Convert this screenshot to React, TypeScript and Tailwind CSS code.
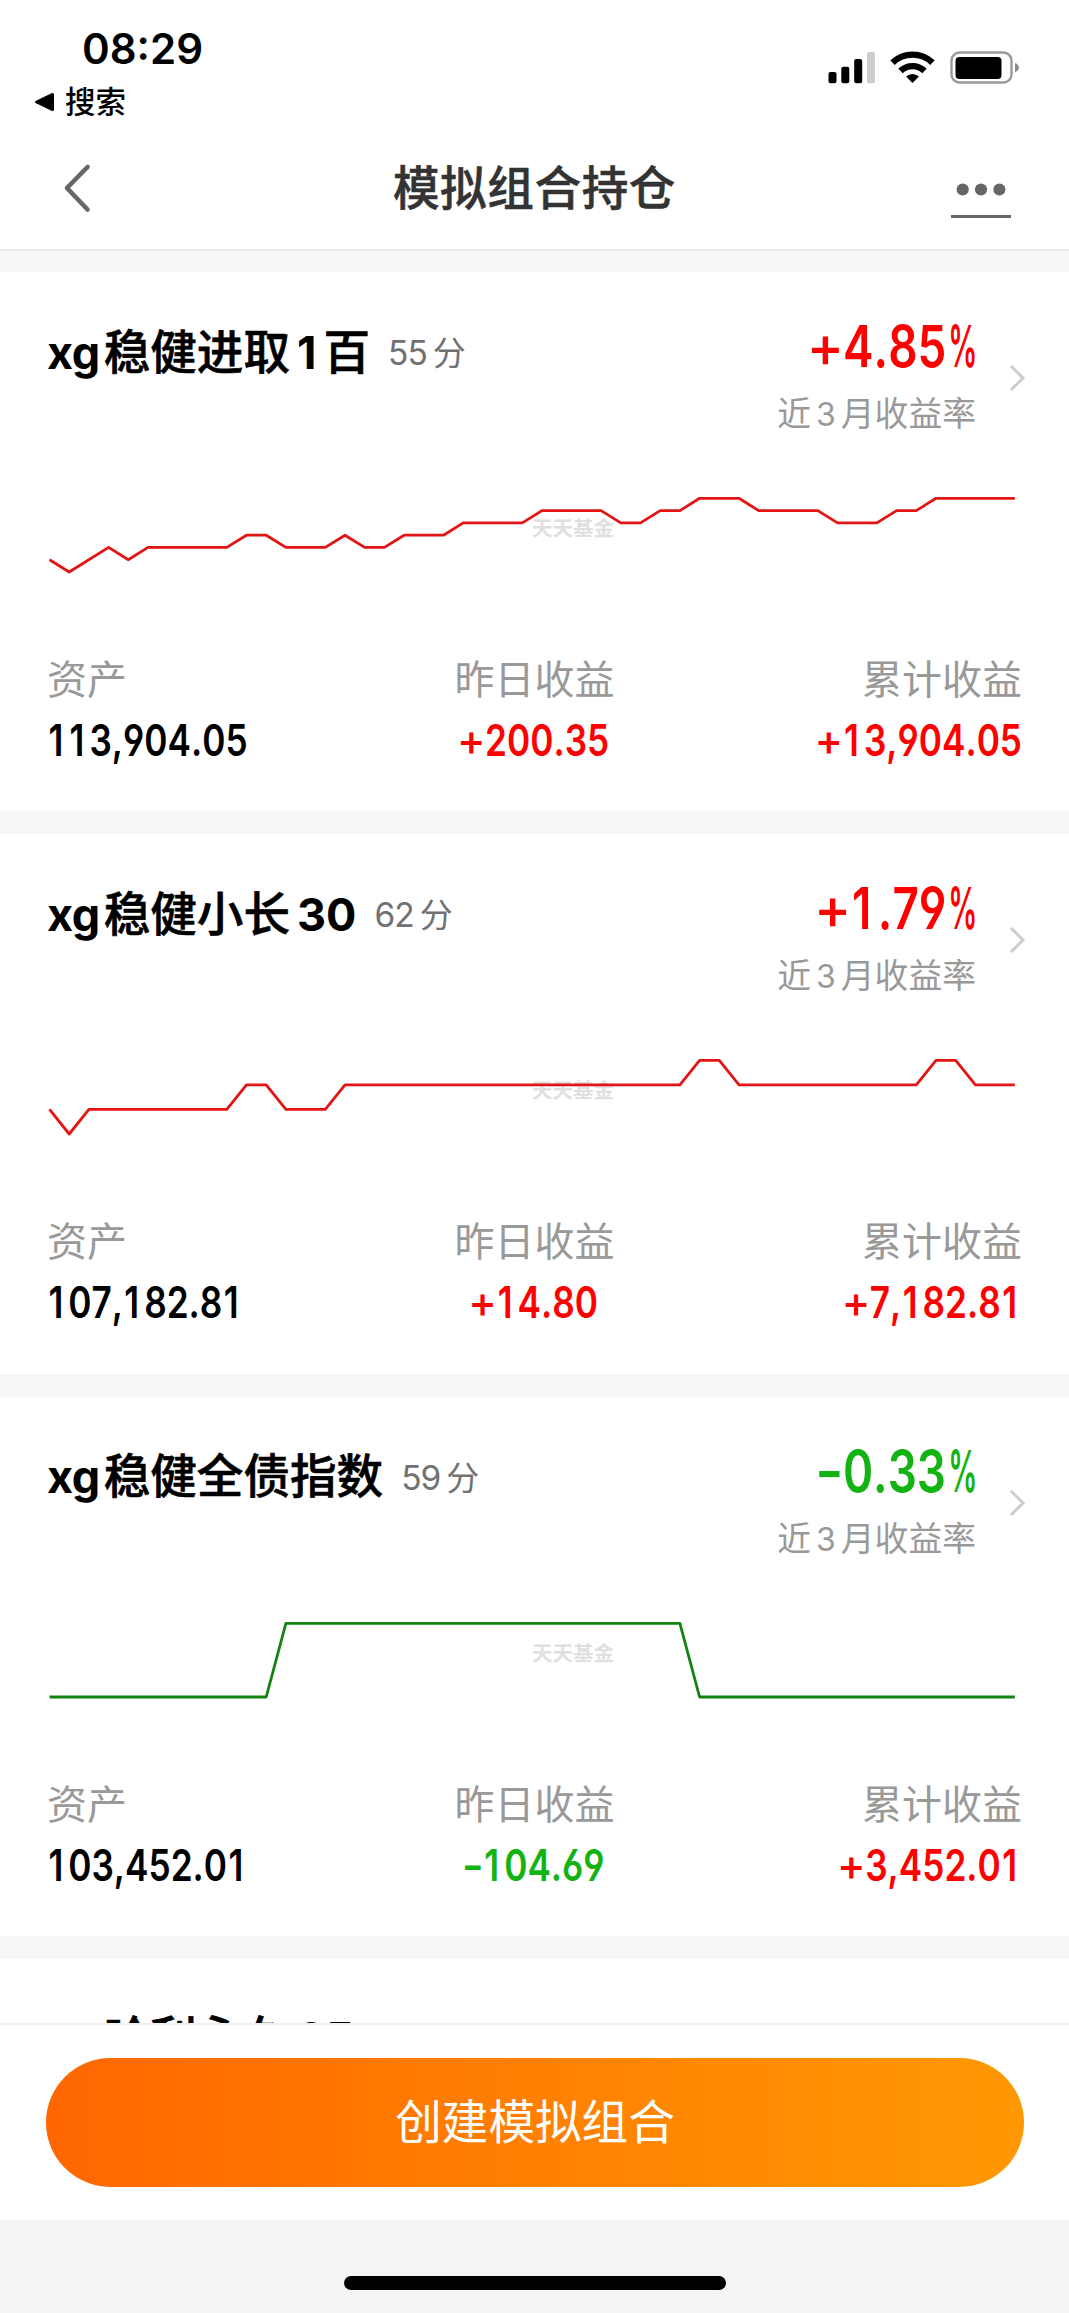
const CJK = "font-['Inter','Noto_Sans_CJK_SC',sans-serif]";

type Tone = 'up' | 'down' | 'plain';

const toneClass: Record<Tone, string> = {
  up: 'text-[#ff0000]',
  down: 'text-[#12b312]',
  plain: 'text-black',
};

type Part = { text: string; latin?: boolean };

type Portfolio = {
  name: Part[];
  score: string;
  rate: string;
  rateTone: Tone;
  asset: string;
  daily: string;
  dailyTone: Tone;
  total: string;
  levels: [number, number][];
  unit: number;
  stroke: string;
};

const portfolios: Portfolio[] = [
  {
    name: [{ text: 'xg', latin: true }, { text: '稳健进取' }, { text: '1', latin: true }, { text: '百' }],
    score: '55',
    rate: '+4.85',
    rateTone: 'up',
    asset: '113,904.05',
    daily: '+200.35',
    dailyTone: 'up',
    total: '+13,904.05',
    levels: [
      [0, 1], [1, 0], [3, 2], [4, 1], [5, 2], [9, 2], [10, 3], [11, 3], [12, 2], [14, 2], [15, 3], [16, 2],
      [17, 2], [18, 3], [20, 3], [21, 4], [24, 4], [25, 5], [28, 5], [29, 4], [30, 4], [31, 5], [32, 5],
      [33, 6], [35, 6], [36, 5], [39, 5], [40, 4], [42, 4], [43, 5], [44, 5], [45, 6], [49, 6],
    ],
    unit: 12.28,
    stroke: '#e31414',
  },
  {
    name: [{ text: 'xg', latin: true }, { text: '稳健小长' }, { text: '30', latin: true }],
    score: '62',
    rate: '+1.79',
    rateTone: 'up',
    asset: '107,182.81',
    daily: '+14.80',
    dailyTone: 'up',
    total: '+7,182.81',
    levels: [
      [0, 1], [1, 0], [2, 1], [9, 1], [10, 2], [11, 2], [12, 1], [14, 1], [15, 2], [32, 2], [33, 3], [34, 3],
      [35, 2], [44, 2], [45, 3], [46, 3], [47, 2], [49, 2],
    ],
    unit: 24.56,
    stroke: '#e31414',
  },
  {
    name: [{ text: 'xg', latin: true }, { text: '稳健全债指数' }],
    score: '59',
    rate: '-0.33',
    rateTone: 'down',
    asset: '103,452.01',
    daily: '-104.69',
    dailyTone: 'down',
    total: '+3,452.01',
    levels: [[0, 0], [11, 0], [12, 1], [32, 1], [33, 0], [49, 0]],
    unit: 73.7,
    stroke: '#128212',
  },
];

function Name({ parts }: { parts: Part[] }) {
  return (
    <div className="flex items-baseline pb-[2px] text-[46.6px] leading-[60px] font-bold text-black">
      {parts.map((p, i) =>
        p.latin ? (
          <span key={i} className={i === 0 ? 'mr-[4px] text-[45px] tracking-[-0.5px]' : 'ml-[7px] mr-[7px] text-[45px] last:mr-0'}>
            {p.text}
          </span>
        ) : (
          <span key={i} className="font-medium [-webkit-text-stroke:0.6px_black]">{p.text}</span>
        ),
      )}
    </div>
  );
}

/* The digit 1 is padded so that it takes the same room as the other digits. */
function Figures({ value }: { value: string }) {
  return (
    <>
      {value.split(/([-+]|1)/).map((s, i) => {
        if (s === '+') return <span key={i} className="mr-[0.05em] inline-block scale-x-[1.22] font-medium">+</span>;
        if (s === '-') return <span key={i} className="mr-[0.06em] inline-block scale-x-[1.35]">-</span>;
        if (s === '1') return <span key={i} className="pl-[0.04em] pr-[0.14em]">1</span>;
        return s;
      })}
    </>
  );
}

function Amount({ value, tone, origin }: { value: string; tone: Tone; origin: string }) {
  return (
    <span
      className={`mt-[12px] block text-[44px] leading-[50px] font-semibold [font-kerning:none] [font-feature-settings:'cv03','cv04'] scale-x-[0.8] ${origin} ${toneClass[tone]}`}
    >
      <Figures value={value} />
    </span>
  );
}

function Trend({ levels, unit, stroke }: Pick<Portfolio, 'levels' | 'unit' | 'stroke'>) {
  const points = levels.map(([i, l]) => `${(49.5 + i * 19.7).toFixed(1)},${(77 - l * unit).toFixed(1)}`).join(' ');
  return (
    <div className="relative mt-[65px] h-[80px]">
      <span className="absolute left-[532px] top-[21px] text-[20.5px] leading-[26px] font-bold text-[#e0e0e0]">天天基金</span>
      <svg className="relative block" width="1069" height="80" viewBox="0 0 1069 80">
        <polyline points={points} fill="none" stroke={stroke} strokeWidth="2.8" strokeLinejoin="round" />
      </svg>
    </div>
  );
}

function Card({ p }: { p: Portfolio }) {
  return (
    <section className="mb-[23px] h-[539.3px] shrink-0 bg-white pt-[46px]">
      <div className="flex h-[112px] pl-[47px] pr-[42px]">
        <div className="flex h-[70px] items-center">
          <Name parts={p.name} />
          <div className="ml-[18px] flex items-baseline text-[33px] leading-[60px] text-[#717171]">
            <span className="mr-[6px] text-[33.5px] tracking-[-1px]">{p.score}</span>分
          </div>
        </div>
        <div className="ml-auto flex flex-col items-end">
          <div className={`-mt-px -mr-[1.5px] flex h-[58px] items-center leading-[58px] [font-kerning:none] [font-feature-settings:'cv03','cv04'] ${toneClass[p.rateTone]}`}>
            <span className="block origin-right scale-x-[0.79] text-[58px] font-semibold">
              <Figures value={p.rate} />
            </span>
            <span className="-ml-[27px] block origin-right scale-x-[0.5] text-[58px] font-semibold">%</span>
          </div>
          <div className="mt-[18px] flex items-baseline text-[33.8px] leading-[42px] text-[#999]">
            近<span className="mx-[5px] text-[32px]">3</span>月收益率
          </div>
        </div>
        <svg className="ml-[33px] mt-[45px] shrink-0" width="18" height="30" viewBox="0 0 18 30">
          <path d="M2 3 L14 15 L2 27" fill="none" stroke="#ccc" strokeWidth="3" />
        </svg>
      </div>
      <Trend levels={p.levels} unit={p.unit} stroke={p.stroke} />
      <div className="mt-[82px] grid grid-cols-3 px-[47px] text-[40px] leading-[46px] text-[#999]">
        <div>
          资产
          <Amount value={p.asset} tone="plain" origin="origin-left" />
        </div>
        <div className="text-center">
          昨日收益
          <Amount value={p.daily} tone={p.dailyTone} origin="origin-center" />
        </div>
        <div className="text-right">
          累计收益
          <Amount value={p.total} tone="up" origin="origin-right" />
        </div>
      </div>
    </section>
  );
}

function StatusIcons() {
  return (
    <svg width="192" height="34" viewBox="828 50 192 34">
      <rect x="828.5" y="72" width="8" height="11.3" rx="2" />
      <rect x="841.3" y="66.7" width="8" height="16.6" rx="2" />
      <rect x="854.2" y="59" width="8" height="24.3" rx="2" />
      <rect x="867" y="52" width="8" height="31.3" rx="2" fill="#ccc" />
      <g fill="none" stroke="#000" strokeWidth="6.4">
        <path d="M892.5 62.6 A29 29 0 0 1 932.5 62.6" />
        <path d="M900.5 70.9 A17.5 17.5 0 0 1 924.5 70.9" />
      </g>
      <path d="M912.5 83 L906 76.5 A9.5 9.5 0 0 1 919 76.5 Z" />
      <rect x="951.5" y="52.5" width="60" height="30" rx="8" fill="none" stroke="#999" strokeWidth="2.4" />
      <rect x="955.5" y="57" width="46" height="22" rx="4" />
      <path d="M1015 63 Q1019 64.5 1019 67.5 Q1019 70.5 1015 72 Z" fill="#888" />
    </svg>
  );
}

export default function App() {
  return (
    <div lang="zh-CN" className={`flex h-[2313px] w-[1069px] flex-col overflow-hidden bg-[#f6f6f6] ${CJK}`}>
      <header className="h-[251px] shrink-0 border-b-2 border-[#ebebeb] bg-white">
        <div className="flex h-[126px] justify-between pl-[34px] pr-[49px]">
          <div className="pt-[24px]">
            <div className="pl-[48px] text-[42px] leading-[50px] font-semibold text-black">08:29</div>
            <div className="flex items-center text-[30.5px] leading-[55px] font-medium text-black">
              <svg width="21" height="20" viewBox="0 0 21 20" className="mr-[10px]">
                <path d="M2 8.7 L17.5 1.2 Q20 0.3 20 2.5 V17.5 Q20 19.7 17.5 18.8 L2 11.3 Q0 10 2 8.7Z" />
              </svg>
              搜索
            </div>
          </div>
          <div className="pt-[50px]">
            <StatusIcons />
          </div>
        </div>
        <div className="flex h-[123px] items-center justify-between pl-[61px] pr-[58px]">
          <svg width="60" height="52" viewBox="0 0 60 52">
            <path d="M26.5 5 L6 26 L26.5 47.5" fill="none" stroke="#666" strokeWidth="4.6" strokeLinecap="round" strokeLinejoin="round" />
          </svg>
          <h1 className="-ml-[3px] text-[46.6px] leading-[60px] font-medium tracking-[0.6px] text-[#333] [-webkit-text-stroke:0.5px_#333]">模拟组合持仓</h1>
          <svg width="60" height="60" viewBox="0 0 60 60">
            <g fill="#666">
              <circle cx="11.7" cy="31.5" r="6.1" />
              <circle cx="30" cy="31.5" r="6.1" />
              <circle cx="48.4" cy="31.5" r="6.1" />
              <rect y="57" width="60" height="3" />
            </g>
          </svg>
        </div>
      </header>
      <main className="flex min-h-0 flex-1 flex-col overflow-hidden pt-[21px]">
        {portfolios.map((p) => (
          <Card key={p.asset} p={p} />
        ))}
        <section className="shrink-0 bg-white pb-[60px] pl-[47px] pt-[46px]">
          <div className="flex h-[70px] items-center">
            <Name parts={[{ text: 'xg', latin: true }, { text: '哈利永久' }, { text: '25', latin: true }]} />
          </div>
        </section>
      </main>
      <footer className="h-[290px] shrink-0 bg-[#f4f4f4]">
        <div className="h-[197px] border-t-2 border-[#f0f0f0] bg-white pl-[46px] pr-[45px] pt-[33px]">
          <button className="flex h-[129px] w-full items-center justify-center rounded-full bg-linear-to-r from-[#ff6600] to-[#ff9804] text-[46.6px] text-white">
            创建模拟组合
          </button>
        </div>
        <div className="mx-auto mt-[56px] h-[14px] w-[382px] rounded-full bg-black" />
      </footer>
    </div>
  );
}
